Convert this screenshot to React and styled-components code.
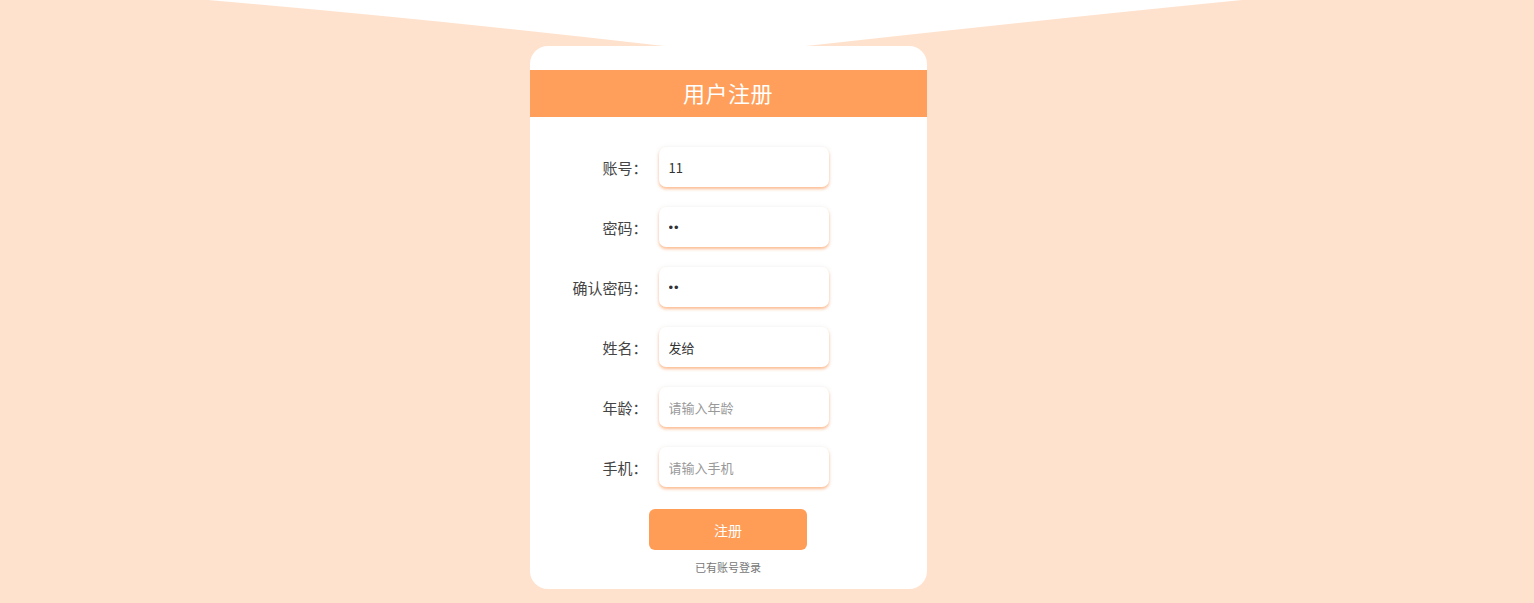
import React, { useState } from "react";
import styled, { createGlobalStyle } from "styled-components";

const GlobalStyle = createGlobalStyle`
  html, body {
    margin: 0;
    padding: 0;
    background: #ffe2cd;
    font-family: "Noto Sans CJK SC", "Noto Sans", sans-serif;
  }
`;

const Page = styled.div`
  position: relative;
  width: 100%;
  height: 603px;
  overflow: hidden;
  background: #ffe2cd;
  display: flex;
  justify-content: center;
  padding-top: 46px;
  box-sizing: border-box;
`;

const Backdrop = styled.svg`
  position: absolute;
  top: 0;
  left: 0;
  width: 1534px;
  height: 60px;
`;

const Card = styled.div`
  position: relative;
  width: 397px;
  height: 543px;
  margin-right: 78px;
  background: #fff;
  border-radius: 18px;
  padding-top: 24px;
  box-sizing: border-box;
`;

const Header = styled.div`
  height: 47px;
  background: #ff9f5b;
  display: flex;
  align-items: center;
  justify-content: center;
  color: #fff;
  font-size: 22px;
  letter-spacing: 0.5px;
  padding-bottom: 3px;
  box-sizing: border-box;
`;

const Form = styled.div`
  display: flex;
  flex-direction: column;
  gap: 20px;
  padding-top: 30px;
`;

const Row = styled.div`
  display: grid;
  grid-template-columns: 118px 170px;
  column-gap: 11px;
  align-items: center;
`;

const Label = styled.label`
  text-align: right;
  font-size: 15px;
  color: #444;
`;

const Input = styled.input`
  width: 170px;
  height: 40px;
  box-sizing: border-box;
  border: none;
  outline: none;
  border-radius: 7px;
  padding: 0 10px;
  font-family: ${(p) =>
    p.type === "password"
      ? `"Liberation Sans", Arial, sans-serif`
      : `"Noto Sans CJK SC", "Noto Sans", sans-serif`};
  font-size: ${(p) => (p.type === "password" ? "13px" : "13px")};
  letter-spacing: ${(p) => (p.type === "password" ? "1px" : "0")};
  color: #333;
  background: #fff;
  box-shadow: 0 2px 3px rgba(255, 150, 80, 0.6), 0 0 6px rgba(0, 0, 0, 0.05);
  &::placeholder {
    color: #999;
    letter-spacing: 0;
  }
`;

const Actions = styled.div`
  display: flex;
  flex-direction: column;
  align-items: center;
  padding-top: 22px;
`;

const Button = styled.button`
  width: 158px;
  height: 41px;
  border: none;
  border-radius: 6px;
  background: #ff9c56;
  color: #fff;
  font-family: "Noto Sans CJK SC", "Noto Sans", sans-serif;
  font-size: 14px;
  cursor: pointer;
`;

const LoginLink = styled.a`
  margin-top: 9px;
  font-size: 11px;
  color: #777;
  cursor: pointer;
`;

const fields = [
  { label: "账号：", name: "account", type: "text", value: "11", placeholder: "请输入账号" },
  { label: "密码：", name: "password", type: "password", value: "11", placeholder: "请输入密码" },
  { label: "确认密码：", name: "confirm", type: "password", value: "11", placeholder: "请确认密码" },
  { label: "姓名：", name: "name", type: "text", value: "发给", placeholder: "请输入姓名" },
  { label: "年龄：", name: "age", type: "text", value: "", placeholder: "请输入年龄" },
  { label: "手机：", name: "phone", type: "text", value: "", placeholder: "请输入手机" },
];

function App() {
  const [form, setForm] = useState(
    Object.fromEntries(fields.map((f) => [f.name, f.value]))
  );

  const handleChange = (e) => {
    setForm({ ...form, [e.target.name]: e.target.value });
  };

  return (
    <>
      <GlobalStyle />
      <Page>
        {/* white wedge at the top of the page */}
        <Backdrop viewBox="0 0 1534 60">
          <path d="M208 0 Q430 19 664 46 L806 46 Q1030 21 1242 0 Z" fill="#ffffff" />
        </Backdrop>
        <Card>
          <Header>用户注册</Header>
          <Form>
            {fields.map((f) => (
              <Row key={f.name}>
                <Label>{f.label}</Label>
                <Input
                  type={f.type}
                  name={f.name}
                  value={form[f.name]}
                  placeholder={f.placeholder}
                  onChange={handleChange}
                />
              </Row>
            ))}
          </Form>
          <Actions>
            <Button>注册</Button>
            <LoginLink>已有账号登录</LoginLink>
          </Actions>
        </Card>
      </Page>
    </>
  );
}

export default App;
